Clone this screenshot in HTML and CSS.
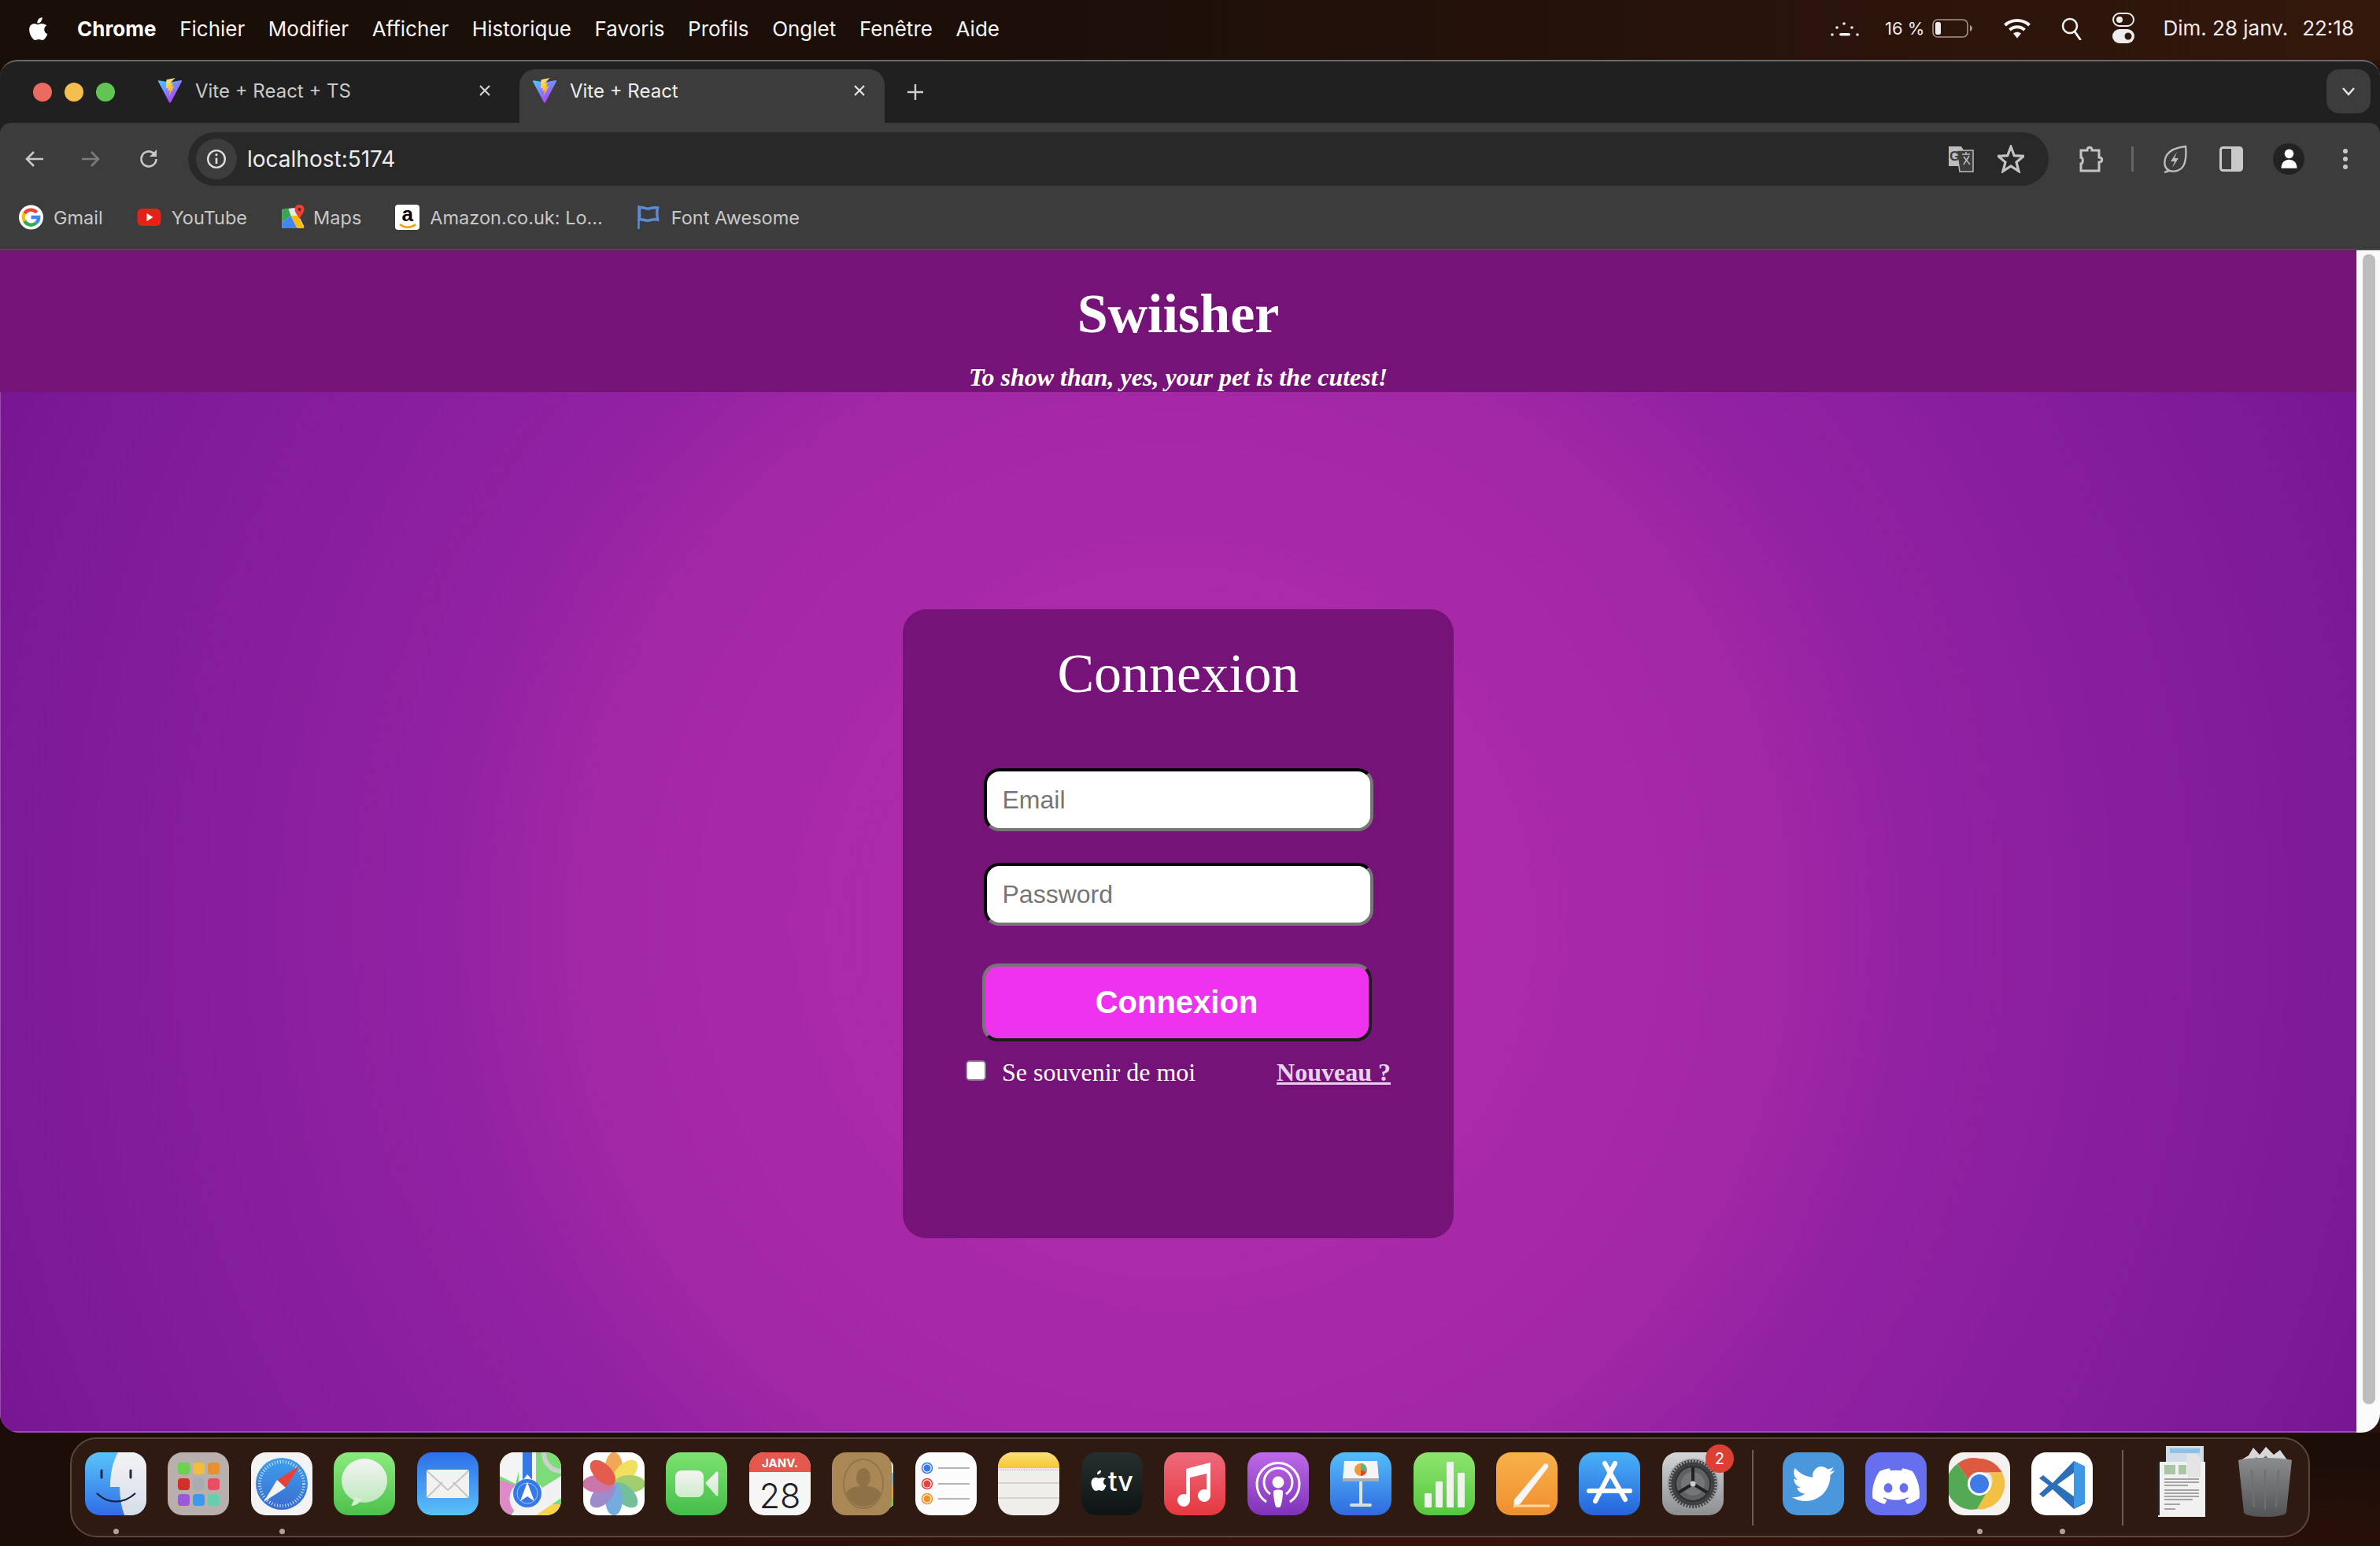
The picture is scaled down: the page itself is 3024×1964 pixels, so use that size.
FILE: index.html
```html
<!DOCTYPE html>
<html lang="fr">
<head>
  <meta charset="utf-8">
  <title>Swiisher</title>
  <link rel="stylesheet" href="styles.css">
</head>
<body>
  <!-- macOS menu bar -->
  <header class="menubar">
    <svg class="apple" viewBox="0 0 24 30"><path d="M17 1c.2 2.200-.6 4-1.700 5.300-1.200 1.400-2.900 2.200-4.400 2-.2-2 .7-3.900 1.700-5.100C13.800 1.900 15.600 1.100 17 1zM22.500 10.800c-2 1.300-3 3-3 5.200 0 2.500 1.300 4.500 3.900 5.500-.6 1.800-1.500 3.500-2.700 5.100-1.100 1.500-2.200 2.400-3.500 2.400-1.600 0-2.400-1-4.400-1-2.100 0-3 1-4.500 1-1.400 0-2.700-1.200-3.900-3C2.700 23.500 1 19.500 1 16.200 1 11.400 4 8.700 7.300 8.700c1.700 0 3.200 1.100 4.200 1.100 1.100 0 2.700-1.200 4.800-1.200 2.500 0 4.800 1 6.200 2.200z" fill="#fff"/></svg>
    <nav class="menu">
      <span class="menu-app">Chrome</span>
      <span>Fichier</span>
      <span>Modifier</span>
      <span>Afficher</span>
      <span>Historique</span>
      <span>Favoris</span>
      <span>Profils</span>
      <span>Onglet</span>
      <span>Fenêtre</span>
      <span>Aide</span>
    </nav>
    <div class="status">
      <svg class="st-dots" viewBox="0 0 36 24"><g fill="#eee"><circle cx="2" cy="20" r="1.800"/><circle cx="8" cy="11" r="1.800"/><circle cx="17" cy="6" r="1.800"/><circle cx="27" cy="11" r="1.800"/><circle cx="34" cy="20" r="1.800"/><rect x="11" y="18" width="14" height="3.600" rx="1.800"/></g></svg>
      <span class="st-pct">16 %</span>
      <svg class="st-batt" viewBox="0 0 52 26"><rect x="1" y="2" width="44" height="22" rx="6" fill="none" stroke="#a8958c" stroke-width="1.600"/><rect x="4" y="5" width="7" height="16" rx="2.500" fill="#eee"/><path d="M48 9c2 1 3 2.500 3 4s-1 3-3 4z" fill="#a8958c"/></svg>
      <svg class="st-wifi" viewBox="0 0 36 30"><g fill="none" stroke="#f4f4f4" stroke-width="4"><path d="M2.500 11C11 3 25 3 33.500 11"/><path d="M8.500 17c5.500-5 13.500-5 19 0"/></g><path d="M13 21.500c3-2.500 7-2.500 10 0l-5 6z" fill="#f4f4f4"/></svg>
      <svg class="st-search" viewBox="0 0 26 30"><circle cx="11" cy="12" r="9" fill="none" stroke="#f0f0f0" stroke-width="2.600"/><path d="M17 19l7 10" stroke="#f0f0f0" stroke-width="3" stroke-linecap="round"/></svg>
      <svg class="st-ctrl" viewBox="0 0 28 40"><rect x="1" y="1" width="26" height="16" rx="8" fill="none" stroke="#eee" stroke-width="2"/><circle cx="9" cy="9" r="4" fill="#eee"/><rect y="21" width="28" height="18" rx="9" fill="#eee"/><circle cx="20" cy="30" r="4.500" fill="#33170b"/></svg>
      <span class="st-date">Dim. 28 janv.</span>
      <span class="st-time">22:18</span>
    </div>
  </header>

  <div class="window">
    <!-- tab strip -->
    <div class="tabstrip">
      <div class="lights">
        <span class="light red"></span>
        <span class="light yellow"></span>
        <span class="light green"></span>
      </div>
      <div class="tab">
        <svg class="favicon" viewBox="0 0 32 34"><defs><linearGradient id="va" x1="0" y1="0" x2="0.7" y2="1"><stop offset="0" stop-color="#41d1ff"/><stop offset="1" stop-color="#bd34fe"/></linearGradient><linearGradient id="vb" x1="0" y1="0" x2="0.3" y2="1"><stop offset="0" stop-color="#ffea83"/><stop offset="1" stop-color="#ffa800"/></linearGradient></defs><path d="M31 5.500 17 32q-1 1.500-2 0L1 5.500Q.3 4 2 4.200L16 6.500 30 4q1.700-.2 1 1.500z" fill="url(#va)"/><path d="M22.500 1 11.500 3.200 10.800 14.500l3-.7-.8 3.800 3-.8-1.400 7.500L21.500 11.300l-3.300.6 1.200-4.500-3.300.5z" fill="url(#vb)"/></svg>
        <span class="tab-title">Vite + React + TS</span>
        <svg class="tab-close" viewBox="0 0 16 16"><path d="M2 2l12 12M14 2 2 14" stroke="#d0d0d0" stroke-width="2.200"/></svg>
      </div>
      <div class="tab tab-active">
        <svg class="favicon" viewBox="0 0 32 34"><path d="M31 5.500 17 32q-1 1.500-2 0L1 5.500Q.3 4 2 4.200L16 6.500 30 4q1.700-.2 1 1.500z" fill="url(#va)"/><path d="M22.500 1 11.500 3.200 10.800 14.500l3-.7-.8 3.800 3-.8-1.400 7.500L21.500 11.300l-3.300.6 1.200-4.500-3.300.5z" fill="url(#vb)"/></svg>
        <span class="tab-title">Vite + React</span>
        <svg class="tab-close" viewBox="0 0 16 16"><path d="M2 2l12 12M14 2 2 14" stroke="#e4e4e4" stroke-width="2.200"/></svg>
      </div>
      <svg class="tab-new" viewBox="0 0 20 20"><path d="M10 0v20M0 10h20" stroke="#d0d0d0" stroke-width="2.400"/></svg>
      <div class="tab-list">
        <svg viewBox="0 0 18 12"><path d="M2 2l7 8 7-8" fill="none" stroke="#e8e8e8" stroke-width="2.400"/></svg>
      </div>
    </div>

    <!-- toolbar -->
    <div class="toolbar">
      <svg class="tb-icon" viewBox="0 0 28 28"><path d="M25 14H5M13 5l-9 9 9 9" fill="none" stroke="#c8c8c8" stroke-width="2.600"/></svg>
      <svg class="tb-icon tb-fwd" viewBox="0 0 28 28"><path d="M3 14h20M15 5l9 9-9 9" fill="none" stroke="#7c7c7c" stroke-width="2.600"/></svg>
      <svg class="tb-icon tb-reload" viewBox="0 0 28 28"><path d="M23.500 14a9.500 9.500 0 1 1-3-7" fill="none" stroke="#c8c8c8" stroke-width="2.600"/><path d="M24 2v9h-9z" fill="#c8c8c8"/></svg>
      <div class="omnibox">
        <span class="site-info">
          <svg viewBox="0 0 24 24"><circle cx="12" cy="12" r="10" fill="none" stroke="#ddd" stroke-width="2.200"/><path d="M12 10.500v7" stroke="#ddd" stroke-width="2.400"/><circle cx="12" cy="7" r="1.500" fill="#ddd"/></svg>
        </span>
        <span class="url">localhost:5174</span>
        <svg class="omni-translate" viewBox="0 0 34 34"><path d="M1 1h16l3 5h0v20H1z" fill="#bdbdbd"/><path d="M11 6h21v27H15z" fill="#3c3c3c" stroke="#bdbdbd" stroke-width="1.500"/><path d="M18 11h10M23 8v3M20 24l7-11M20 14l8 10" stroke="#bdbdbd" stroke-width="1.500" fill="none"/><text x="2" y="19" class="translate-g">G</text></svg>
        <svg class="omni-star" viewBox="0 0 34 36"><path d="M17 2.500l4.300 11.200 11.700.7-9 7.600 3 11.500L17 27l-10 6.500 3-11.500-9-7.600 11.700-.7z" fill="none" stroke="#c4c4c4" stroke-width="3.200"/></svg>
      </div>
      <svg class="tb-puzzle" viewBox="0 0 34 36"><path d="M3 7h8c0-5 6-5 6 0h9v9c5 0 5 6 0 6v11H3v-9c3 0 3-8 0-8z" fill="none" stroke="#c4c4c4" stroke-width="3"/></svg>
      <span class="tb-sep"></span>
      <svg class="tb-leaf" viewBox="0 0 32 36"><path d="M30 2c1 10 1 18-3 25-3 5-10 8-17 6C2 30 2 20 6 13 11 6 20 3 30 2zM9 33l-6 2" fill="none" stroke="#bdbdbd" stroke-width="2.400"/><path d="M19 9l-8 12h5l-3 8 8-12h-5z" fill="#bdbdbd"/></svg>
      <svg class="tb-panel" viewBox="0 0 30 32"><rect x="1.500" y="1.500" width="27" height="29" rx="3" fill="none" stroke="#c8c8c8" stroke-width="3"/><rect x="15" y="1.500" width="14" height="29" fill="#c8c8c8"/></svg>
      <span class="avatar">
        <svg viewBox="0 0 26 36"><circle cx="13" cy="10" r="7" fill="#fff"/><path d="M1 32c0-9 6-13 12-13s12 4 12 13z" fill="#fff"/></svg>
      </span>
      <svg class="tb-more" viewBox="0 0 6 26"><g fill="#c8c8c8"><circle cx="3" cy="3" r="3"/><circle cx="3" cy="13" r="3"/><circle cx="3" cy="23" r="3"/></g></svg>
    </div>

    <!-- bookmarks bar -->
    <div class="bookmarks">
      <a class="bm">
        <svg viewBox="0 0 32 32"><circle cx="16" cy="16" r="16" fill="#fff"/><g fill="none" stroke-width="4.500"><path d="M23.300 9.700A10 10 0 0 0 7.400 11" stroke="#ea4335"/><path d="M7.400 11a10 10 0 0 0 0 10" stroke="#fbbc05"/><path d="M7.400 21a10 10 0 0 0 15.400 2.400" stroke="#34a853"/><path d="M22.800 23.400A10 10 0 0 0 26 16H16" stroke="#4285f4"/></g></svg>
        <span>Gmail</span>
      </a>
      <a class="bm">
        <svg viewBox="0 0 30 32"><rect y="5" width="30" height="22" rx="6" fill="#e62117"/><path d="M12 11l8 5-8 5z" fill="#fff"/></svg>
        <span>YouTube</span>
      </a>
      <a class="bm bm-maps">
        <svg viewBox="0 0 30 32"><path d="M1 6l16-2 12 24-28 2z" fill="#e8e8e8"/><path d="M1 6l8-1 3 9-11 8z" fill="#34a853"/><path d="M1 22l11-8 8 16H1z" fill="#4285f4"/><path d="M12 14l8 16h9l-8-16z" fill="#fbbc05"/><path d="M23 0c4 0 6 3 6 6 0 4-4 8-6 12-2-4-6-8-6-12 0-3 2-6 6-6z" fill="#ea4335"/><circle cx="23" cy="6" r="2.200" fill="#8e1c14"/></svg>
        <span>Maps</span>
      </a>
      <a class="bm">
        <span class="bm-amazon">a<svg viewBox="0 0 22 8"><path d="M1 1c6 5 14 5 20 0" fill="none" stroke="#f90" stroke-width="2.400"/></svg></span>
        <span>Amazon.co.uk: Lo...</span>
      </a>
      <a class="bm">
        <svg viewBox="0 0 30 32"><path d="M2 1v30" stroke="#5b8bd6" stroke-width="2.500"/><path d="M3 4c4-2 8 2 12 1s8-2 11-1c-1 4-1 8 0 15-3-1-7 0-11 1s-8-2-12-1z" fill="none" stroke="#5b8bd6" stroke-width="3.500"/></svg>
        <span>Font Awesome</span>
      </a>
    </div>

    <!-- page -->
    <div class="viewport">
      <main class="page">
        <div class="site-header">
          <h1 class="site-title">Swiisher</h1>
          <p class="site-tagline">To show than, yes, your pet is the cutest!</p>
        </div>
        <div class="page-body">
          <form class="login-card">
            <h2 class="login-title">Connexion</h2>
            <input class="login-input" type="text" placeholder="Email">
            <input class="login-input" type="password" placeholder="Password">
            <button class="login-btn" type="button">Connexion</button>
            <div class="login-row">
              <label class="remember"><input type="checkbox"> Se souvenir de moi</label>
              <a class="new-link" href="#">Nouveau ?</a>
            </div>
          </form>
        </div>
      </main>
      <div class="scrollbar"><div class="scroll-thumb"></div></div>
    </div>
  </div>

  <!-- dock -->
  <footer class="desktop">
    <div class="dock">
      <div class="dock-item running"><svg viewBox="0 0 78 80"><defs><linearGradient id="f1" x1="0" y1="0" x2="0" y2="1"><stop offset="0" stop-color="#5ac4fb"/><stop offset="1" stop-color="#2f6de6"/></linearGradient><linearGradient id="f2" x1="0" y1="0" x2="0" y2="1"><stop offset="0" stop-color="#f3f3f5"/><stop offset="1" stop-color="#d6dde9"/></linearGradient></defs><rect width="78" height="80" rx="19" fill="url(#f1)"/><path d="M42 0C35 13 32 27 32 44h12c0 13 2 25 6 36h9a19 19 0 0 0 19-19V19A19 19 0 0 0 59 0z" fill="url(#f2)"/><path d="M21 23v9M58 23v9" stroke="#1d2b45" stroke-width="3" stroke-linecap="round"/><path d="M15 52c14 14 34 14 49 0" fill="none" stroke="#14213a" stroke-width="2.200"/></svg></div>

      <div class="dock-item"><svg viewBox="0 0 78 80"><rect width="78" height="80" rx="19" fill="#b8b0ac"/><rect x="13" y="13" width="15" height="15" rx="4" fill="#6bd24e"/><rect x="32" y="13" width="15" height="15" rx="4" fill="#f2bd3b"/><rect x="51" y="13" width="15" height="15" rx="4" fill="#e88f2e"/><rect x="13" y="33" width="15" height="15" rx="4" fill="#d0322a"/><rect x="32" y="33" width="15" height="15" rx="4" fill="#a7adb0"/><rect x="51" y="33" width="15" height="15" rx="4" fill="#ea4c61"/><rect x="13" y="53" width="15" height="15" rx="4" fill="#9b59d8"/><rect x="32" y="53" width="15" height="15" rx="4" fill="#3b9af0"/><rect x="51" y="53" width="15" height="15" rx="4" fill="#66cdb0"/></svg></div>

      <div class="dock-item running"><svg viewBox="0 0 78 80"><defs><linearGradient id="s1" x1="0" y1="0" x2="0" y2="1"><stop offset="0" stop-color="#3da0ee"/><stop offset="1" stop-color="#3a6cd0"/></linearGradient></defs><rect width="78" height="80" rx="19" fill="#f3f3f3"/><circle cx="39" cy="40" r="33" fill="url(#s1)"/><circle cx="39" cy="40" r="28" fill="none" stroke="#d8e8fa" stroke-width="4" stroke-dasharray="1 2.500"/><path d="M62 17 33 35l11 10z" fill="#e5423b"/><path d="M16 63l17-28 11 10z" fill="#f3f3f3"/></svg></div>

      <div class="dock-item"><svg viewBox="0 0 78 80"><defs><linearGradient id="m1" x1="0" y1="0" x2="0" y2="1"><stop offset="0" stop-color="#8ceb7e"/><stop offset="1" stop-color="#4cc14c"/></linearGradient><linearGradient id="m2" x1="0" y1="0" x2="0" y2="1"><stop offset="0" stop-color="#f4f4f4"/><stop offset="1" stop-color="#bfe8bd"/></linearGradient></defs><rect width="78" height="80" rx="19" fill="url(#m1)"/><ellipse cx="39" cy="36" rx="29" ry="28" fill="url(#m2)"/><path d="M26 56c0 5-2 9-4 12 5 0 10-3 14-8z" fill="#d6efd2"/></svg></div>

      <div class="dock-item"><svg viewBox="0 0 78 80"><defs><linearGradient id="ml" x1="0" y1="0" x2="0" y2="1"><stop offset="0" stop-color="#2c6fe8"/><stop offset="1" stop-color="#5bc1fa"/></linearGradient></defs><rect width="78" height="80" rx="19" fill="url(#ml)"/><rect x="12" y="22" width="54" height="36" rx="3" fill="#f2f2f2"/><path d="M13 24l26 24 26-24M13 57l19-19M65 57 46 38" fill="none" stroke="#c4c4c4" stroke-width="1.800"/></svg></div>

      <div class="dock-item"><svg viewBox="0 0 78 80"><defs><clipPath id="mc"><rect width="78" height="80" rx="19"/></clipPath></defs><g clip-path="url(#mc)"><rect width="78" height="80" fill="#f2f2f2"/><path d="M0 0h78v80H0z" fill="#7ddb78"/><path d="M0 35 30 45 14 80H0z" fill="#e089c9"/><path d="M45 80l12-14 21 0v14z" fill="#f7d24a"/><path d="M30 60 78 30v28L46 80H14z" fill="#f1f1f1"/><path d="M0 0h30l-10 40L0 30z" fill="#f4f4f4"/><rect x="24" y="0" width="22" height="40" fill="#f4f4f4"/><rect x="29" y="0" width="12" height="40" fill="#3778e8"/><path d="M56 0c0 14 10 24 22 24" fill="none" stroke="#cfcfcf" stroke-width="6"/><path d="M35 28l-7 9a23 23 0 1 0 15 0z" fill="#f2f2f2"/><circle cx="35" cy="52" r="18" fill="#3778e8"/><circle cx="35" cy="52" r="13" fill="none" stroke="#9cc0f5" stroke-width="1"/><path d="M35 38l9 24-9-6-9 6z" fill="#fff"/></g></svg></div>

      <div class="dock-item"><svg viewBox="0 0 78 80"><rect width="78" height="80" rx="19" fill="#fff"/><g transform="translate(39 40)" opacity=".85"><ellipse cy="-20" rx="11" ry="20" fill="#ef9a3a"/><ellipse cy="-20" rx="11" ry="20" fill="#efdb45" transform="rotate(45)"/><ellipse cy="-20" rx="11" ry="20" fill="#93c655" transform="rotate(90)"/><ellipse cy="-20" rx="11" ry="20" fill="#5cb48a" transform="rotate(135)"/><ellipse cy="-20" rx="11" ry="20" fill="#5c9fd8" transform="rotate(180)"/><ellipse cy="-20" rx="11" ry="20" fill="#8a78c4" transform="rotate(225)"/><ellipse cy="-20" rx="11" ry="20" fill="#c45e9c" transform="rotate(270)"/><ellipse cy="-20" rx="11" ry="20" fill="#e0402f" transform="rotate(315)"/></g></svg></div>

      <div class="dock-item"><svg viewBox="0 0 78 80"><defs><linearGradient id="ft" x1="0" y1="0" x2="0" y2="1"><stop offset="0" stop-color="#7de36f"/><stop offset="1" stop-color="#45bd4a"/></linearGradient><linearGradient id="ft2" x1="0" y1="0" x2="0" y2="1"><stop offset="0" stop-color="#f4f4f4"/><stop offset="1" stop-color="#cfeccb"/></linearGradient></defs><rect width="78" height="80" rx="19" fill="url(#ft)"/><rect x="12" y="23" width="36" height="34" rx="8" fill="url(#ft2)"/><path d="M52 39l13-13v28z" fill="url(#ft2)" stroke="url(#ft2)" stroke-width="3" stroke-linejoin="round"/></svg></div>

      <div class="dock-item"><svg viewBox="0 0 78 80"><defs><clipPath id="cc"><rect width="78" height="80" rx="19"/></clipPath></defs><g clip-path="url(#cc)"><rect width="78" height="80" fill="#f6f6f6"/><rect width="78" height="25" fill="#e5584d"/></g><text x="39" y="19" class="cal-month">JANV.</text><text x="39" y="71" class="cal-day">28</text></svg></div>

      <div class="dock-item"><svg viewBox="0 0 78 80"><path d="M66 10h4c5 0 8 4 8 8v44c0 6-3 9-8 9h-4z" fill="#e8e8e8"/><rect x="70" y="26" width="8" height="16" fill="#62b7e8"/><rect x="70" y="42" width="8" height="16" fill="#ef9d3a"/><rect x="70" y="58" width="8" height="10" fill="#6ccb5f"/><rect width="76" height="80" rx="18" fill="#a98856"/><ellipse cx="40" cy="40" rx="25" ry="31" fill="none" stroke="#8e7146" stroke-width="1.500"/><ellipse cx="40" cy="32" rx="9" ry="12" fill="#8e7146"/><path d="M18 52c4-8 12-9 22-9s18 1 22 9c-4 12-14 17-22 17s-18-5-22-17z" fill="#8e7146"/></svg></div>

      <div class="dock-item"><svg viewBox="0 0 78 80"><rect width="78" height="80" rx="19" fill="#fcfcfc"/><g fill="none" stroke-width="1.500"><circle cx="15" cy="20" r="6.500" stroke="#3778e8"/><circle cx="15" cy="40" r="6.500" stroke="#e5423b"/><circle cx="15" cy="59" r="6.500" stroke="#ef9222"/></g><circle cx="15" cy="20" r="4.500" fill="#3778e8"/><circle cx="15" cy="40" r="4.500" fill="#e5423b"/><circle cx="15" cy="59" r="4.500" fill="#ef9222"/><path d="M29 20h40M29 40h40M29 59h40" stroke="#b4b4b4" stroke-width="2"/></svg></div>

      <div class="dock-item"><svg viewBox="0 0 78 80"><defs><clipPath id="nc"><rect width="78" height="80" rx="19"/></clipPath><linearGradient id="ny" x1="0" y1="0" x2="0" y2="1"><stop offset="0" stop-color="#fde07a"/><stop offset="1" stop-color="#f6c62f"/></linearGradient></defs><g clip-path="url(#nc)"><rect width="78" height="80" fill="#efeeea"/><rect width="78" height="20" fill="url(#ny)"/><path d="M0 39h78M0 58h78" stroke="#d4d4d0" stroke-width="2"/><path d="M0 22h78" stroke="#c9c9c5" stroke-width="2" stroke-dasharray="1.500 1.500"/></g></svg></div>

      <div class="dock-item"><svg viewBox="0 0 78 80"><defs><linearGradient id="tv" x1="0" y1="0" x2="0" y2="1"><stop offset="0" stop-color="#26302f"/><stop offset="1" stop-color="#0e1314"/></linearGradient></defs><rect width="78" height="80" rx="19" fill="url(#tv)"/><path d="M25 23c0 3-2 5-5 5 0-3 2-5 5-5zM31 33c-2 1-3 2.500-3 4.500 0 2 1 3.500 3.500 4.500-1 3-3 7-5.500 7-1.500 0-2-1-3.500-1-1.700 0-2.500 1-4 1-2.500 0-6-5-6-10 0-4.500 3-7 5.700-7 1.500 0 3 1 3.800 1 1 0 2.500-1 4.200-1 2 0 3.800.8 4.800 2z" fill="#fff"/><text x="34" y="49" class="tv-label">tv</text></svg></div>

      <div class="dock-item"><svg viewBox="0 0 78 80"><defs><linearGradient id="mu" x1="0" y1="0" x2="0" y2="1"><stop offset="0" stop-color="#ee6a7c"/><stop offset="1" stop-color="#e6383f"/></linearGradient></defs><rect width="78" height="80" rx="19" fill="url(#mu)"/><path d="M28 21 59 13v42a8 8 0 1 1-5-7.500V27L33 32v29a8 8 0 1 1-5-7.500z" fill="#fff"/></svg></div>

      <div class="dock-item"><svg viewBox="0 0 78 80"><defs><linearGradient id="po" x1="0" y1="0" x2="0" y2="1"><stop offset="0" stop-color="#be69e8"/><stop offset="1" stop-color="#7f33b8"/></linearGradient></defs><rect width="78" height="80" rx="19" fill="url(#po)"/><g fill="none" stroke="#fff" stroke-width="3"><path d="M24 63a27 27 0 1 1 30 0"/><path d="M29 53a18 18 0 1 1 20 0"/></g><circle cx="39" cy="38" r="7.500" fill="#fff"/><path d="M33 49c3-2 9-2 12 0 0 9-2 20-4 21h-4c-2-1-4-12-4-21z" fill="#fff"/></svg></div>

      <div class="dock-item"><svg viewBox="0 0 78 80"><defs><linearGradient id="ke" x1="0" y1="0" x2="0" y2="1"><stop offset="0" stop-color="#55bdf8"/><stop offset="1" stop-color="#2f6ae0"/></linearGradient></defs><rect width="78" height="80" rx="19" fill="url(#ke)"/><path d="M18 11h42l2 24H16z" fill="#f5f5f5"/><rect x="16" y="33" width="46" height="4" fill="#a7adb5"/><path d="M37 37h4v28h-4z" fill="#dfe4ea"/><rect x="25" y="65" width="28" height="4" rx="2" fill="#d8dde2"/><circle cx="39" cy="22" r="8" fill="#ef9a3a"/><path d="M39 22V14a8 8 0 0 1 7 11z" fill="#5cb48a"/><path d="M39 22l7 3a8 8 0 0 1-7 5z" fill="#e5423b"/></svg></div>

      <div class="dock-item"><svg viewBox="0 0 78 80"><defs><linearGradient id="nu" x1="0" y1="0" x2="0" y2="1"><stop offset="0" stop-color="#8ee56e"/><stop offset="1" stop-color="#55c83e"/></linearGradient></defs><rect width="78" height="80" rx="19" fill="url(#nu)"/><g fill="#eef5ea"><rect x="14" y="52" width="9" height="18" rx="1"/><rect x="28" y="37" width="9" height="33" rx="1"/><rect x="42" y="12" width="9" height="58" rx="1"/><rect x="56" y="26" width="9" height="44" rx="1"/></g></svg></div>

      <div class="dock-item"><svg viewBox="0 0 78 80"><defs><linearGradient id="pg" x1="0" y1="0" x2="0" y2="1"><stop offset="0" stop-color="#f8b24a"/><stop offset="1" stop-color="#ef8e30"/></linearGradient></defs><rect width="78" height="80" rx="19" fill="url(#pg)"/><path d="M61 15c3-2 6 1 5 4L31 65l-9 6 1-11z" fill="#f6f6f6"/><path d="M22 68h46" stroke="#fbd9a4" stroke-width="3"/></svg></div>

      <div class="dock-item"><svg viewBox="0 0 78 80"><defs><linearGradient id="as" x1="0" y1="0" x2="0" y2="1"><stop offset="0" stop-color="#49b2f7"/><stop offset="1" stop-color="#2563db"/></linearGradient></defs><rect width="78" height="80" rx="19" fill="url(#as)"/><g stroke="#fff" stroke-width="6" stroke-linecap="round"><path d="M46 14 21 62"/><path d="M33 14l26 46"/><path d="M13 49h52"/></g></svg></div>

      <div class="dock-item"><svg viewBox="0 0 78 80"><defs><linearGradient id="se" x1="0" y1="0" x2="0" y2="1"><stop offset="0" stop-color="#d4d6d8"/><stop offset="1" stop-color="#8c8e90"/></linearGradient></defs><rect width="78" height="80" rx="19" fill="url(#se)"/><circle cx="39" cy="40" r="31" fill="#3f4042"/><circle cx="39" cy="40" r="30" fill="none" stroke="#96999b" stroke-width="5" stroke-dasharray="2 2"/><circle cx="39" cy="40" r="22" fill="#5f6163" stroke="#2e2f30" stroke-width="2"/><circle cx="39" cy="40" r="15" fill="#737577"/><g stroke="#222" stroke-width="4"><path d="M39 40V19M39 40l18 11M39 40 21 51"/></g><circle cx="39" cy="40" r="3.500" fill="#ccc"/></svg><span class="badge">2</span></div>

      <span class="dock-sep"></span>

      <div class="dock-item"><svg viewBox="0 0 78 80"><rect width="78" height="80" rx="19" fill="#4b97dc"/><g transform="translate(12 13) scale(2.250)"><path d="M23.953 4.570a10 10 0 01-2.825.775 4.958 4.958 0 002.163-2.723c-.951.555-2.005.959-3.127 1.184a4.920 4.920 0 00-8.384 4.482C7.690 8.095 4.067 6.130 1.640 3.162a4.822 4.822 0 00-.666 2.475c0 1.710.870 3.213 2.188 4.096a4.904 4.904 0 01-2.228-.616v.060a4.923 4.923 0 003.946 4.827 4.996 4.996 0 01-2.212.085 4.936 4.936 0 004.604 3.417 9.867 9.867 0 01-6.102 2.105c-.390 0-.779-.023-1.170-.067a13.995 13.995 0 007.557 2.209c9.053 0 13.998-7.496 13.998-13.985 0-.210 0-.420-.015-.630A9.935 9.935 0 0024 4.590z" fill="#fff"/></g></svg></div>

      <div class="dock-item"><svg viewBox="0 0 78 80"><rect width="78" height="80" rx="19" fill="#6670ef"/><g transform="translate(9 13) scale(2.500)"><path d="M20.317 4.370a19.791 19.791 0 00-4.885-1.515.074.074 0 00-.079.037c-.211.375-.445.865-.608 1.250-1.845-.276-3.680-.276-5.487 0-.164-.393-.406-.874-.618-1.250a.077.077 0 00-.079-.037 19.736 19.736 0 00-4.885 1.515.070.070 0 00-.032.028C.533 9.046-.319 13.580.099 18.058a.082.082 0 00.031.056c2.053 1.508 4.041 2.423 5.993 3.029a.078.078 0 00.084-.028c.462-.630.873-1.295 1.226-1.994a.076.076 0 00-.042-.106c-.653-.248-1.274-.550-1.872-.892a.077.077 0 01-.008-.128c.126-.094.252-.192.372-.291a.074.074 0 01.078-.011c3.928 1.793 8.180 1.793 12.061 0a.074.074 0 01.079.010c.120.099.246.198.373.292a.077.077 0 01-.007.128 12.299 12.299 0 01-1.873.891.077.077 0 00-.041.107c.360.698.772 1.363 1.225 1.993a.076.076 0 00.084.029c1.961-.607 3.950-1.522 6.002-3.029a.077.077 0 00.031-.055c.500-5.177-.838-9.674-3.548-13.661a.061.061 0 00-.031-.029zM8.020 15.331c-1.183 0-2.157-1.086-2.157-2.419 0-1.333.956-2.419 2.157-2.419 1.211 0 2.176 1.095 2.157 2.419 0 1.333-.956 2.419-2.157 2.419zm7.975 0c-1.183 0-2.157-1.086-2.157-2.419 0-1.333.955-2.419 2.157-2.419 1.211 0 2.176 1.095 2.157 2.419 0 1.333-.946 2.419-2.157 2.419z" fill="#fff"/></g></svg></div>

      <div class="dock-item running"><svg viewBox="0 0 78 80"><rect width="78" height="80" rx="19" fill="#f4f1ee"/><circle cx="39" cy="40" r="33" fill="#e8e6e2"/><path d="M39 8a32 32 0 0 1 28.600 17.500H39a15 15 0 0 0-14 9L11 14.500A32 32 0 0 1 39 8z" fill="#dc5a40"/><path d="M67.600 25.500A32 32 0 0 1 36 72l14-24a15 15 0 0 0 1-22.500z" fill="#f2c043"/><path d="M11 14.500l14 20a15 15 0 0 0 25 13.500L36 72A32 32 0 0 1 11 14.500z" fill="#53a954"/><circle cx="39" cy="40" r="15" fill="#fff"/><circle cx="39" cy="40" r="12" fill="#3f7ae6"/></svg></div>

      <div class="dock-item running"><svg viewBox="0 0 78 80"><rect width="78" height="80" rx="19" fill="#fff"/><path d="M54 11 27 39 15 29l-5 4 12 9-12 11 5 4 12-10 27 25 14-7V18z" fill="#2a6fb8"/><path d="M54 11l14 7v46l-14 7V11z" fill="#3d99e6"/><path d="M54 26v30L33 41z" fill="#fff"/></svg></div>

      <span class="dock-sep"></span>

      <div class="dock-item doc-item"><svg viewBox="0 0 64 92"><rect x="12" y="0" width="48" height="30" fill="#cfdde9"/><rect x="17" y="3" width="38" height="6" fill="#8fc0e8"/><rect x="2" y="20" width="60" height="70" fill="#f1f1f1"/><rect x="0" y="20" width="4" height="68" fill="#222"/><rect x="10" y="24" width="14" height="12" fill="#a9c6a4"/><rect x="28" y="24" width="10" height="12" fill="#a9c6a4"/><path d="M38 10l12 0 6 6v24H40z" fill="#e4e4e4"/><path d="M10 42h44M10 46h44M10 50h30M10 56h44M10 60h44M10 64h44M10 68h36M10 74h20M10 80h14" stroke="#8b8b8b" stroke-width="1.500"/></svg></div>

      <div class="dock-item trash-item"><svg viewBox="0 0 70 92"><defs><linearGradient id="tr" x1="0" y1="0" x2="0" y2="1"><stop offset="0" stop-color="#8b8c8e"/><stop offset="1" stop-color="#525456"/></linearGradient></defs><path d="M4 18l10-6 6-10 8 9 8-10 10 10 8-6 10 14z" fill="#d8d8d8"/><path d="M22 14l6 6 8-8 6 8z" fill="#56708c"/><path d="M1 18c10-4 58-4 68 0l-7 66c-1 8-53 8-54 0z" fill="url(#tr)"/><path d="M18 30l3 48M35 30v50M52 30l-3 48" stroke="#6e7072" stroke-width="2"/></svg></div>
    </div>
  </footer>
</body>
</html>
```

FILE: styles.css
```css
* { box-sizing: border-box; }

html, body {
  margin: 0;
  height: 100%;
}

body {
  width: 3024px;
  height: 1964px;
  overflow: hidden;
  display: flex;
  flex-direction: column;
  background: linear-gradient(90deg, #1a0e09, #20100a 50%, #2a130b);
  font-family: Inter, "Noto Sans", sans-serif;
  color: #fff;
}

/* ---- menu bar ---- */
.menubar {
  height: 76px;
  flex: none;
  display: flex;
  align-items: center;
  background: linear-gradient(90deg, #190e08, #1c0f09 45%, #33170b);
  font-size: 26px;
  padding-left: 36px;
}
.apple { width: 25px; height: 31px; margin-right: 37px; margin-top: -4px; }
.menu { display: flex; gap: 29.6px; margin-top: -3px; }
.menu span { color: #f5f5f5; }
.menu .menu-app { font-weight: 700; color: #fff; }
.status {
  margin-left: auto;
  display: flex;
  align-items: center;
  padding-right: 33px;
  margin-top: -5px;
  color: #f0ebe8;
  font-size: 26px;
}
.st-dots { width: 36px; height: 24px; margin-right: 33px; }
.st-pct { font-size: 22px; margin-right: 10px; }
.st-batt { width: 52px; height: 26px; margin-right: 38px; }
.st-wifi { width: 36px; height: 30px; margin-right: 38px; }
.st-search { width: 26px; height: 30px; margin-right: 39px; }
.st-ctrl { width: 28px; height: 40px; margin-right: 36px; }
.st-date { margin-right: 18px; }

/* ---- browser window ---- */
.window {
  height: 1744px;
  flex: none;
  display: flex;
  flex-direction: column;
  border-radius: 22px 22px 24px 24px;
  overflow: hidden;
  background: #202020;
  border-top: 2px solid #6a6a6a;
}

.tabstrip {
  height: 78px;
  flex: none;
  display: flex;
  align-items: flex-start;
  padding-top: 10px;
  position: relative;
}
.lights {
  display: flex;
  gap: 16px;
  padding: 17px 0 0 42px;
  width: 186px;
}
.light { width: 24px; height: 24px; border-radius: 50%; }
.red { background: #ec6a5e; }
.yellow { background: #f5bf4f; }
.green { background: #61c554; }

.tab {
  width: 474px;
  height: 68px;
  padding: 0 36px 14px 14px;
  display: flex;
  align-items: center;
  font-size: 24px;
  color: #c9c9c9;
}
.tab-active {
  width: 464px;
  padding-left: 16px;
  padding-right: 24px;
  background: #3c3c3c;
  border-radius: 20px 20px 0 0;
  color: #eee;
}
.favicon { width: 32px; height: 34px; margin-right: 16px; }
.tab-close { width: 16px; height: 16px; margin-left: auto; }
.tab-new { width: 20px; height: 20px; margin: 19px 0 0 29px; }
.tab-list {
  margin-left: auto;
  margin-right: 12px;
  width: 56px;
  height: 56px;
  border-radius: 16px;
  background: #3c3c3c;
  display: flex;
  align-items: center;
  justify-content: center;
}
.tab-list svg { width: 18px; height: 12px; }

.toolbar {
  height: 92px;
  flex: none;
  background: #3c3c3c;
  border-radius: 14px 14px 0 0;
  display: flex;
  align-items: center;
  padding-left: 30px;
}
.tb-icon { width: 28px; height: 28px; margin-right: 43px; }
.tb-reload { margin-left: 3px; margin-right: 36px; }
.omnibox {
  width: 2364px;
  height: 68px;
  border-radius: 34px;
  background: #282828;
  display: flex;
  align-items: center;
  padding-left: 10px;
  font-size: 28px;
  color: #ececec;
}
.site-info {
  width: 52px;
  height: 52px;
  border-radius: 50%;
  background: #3c3c3c;
  display: flex;
  align-items: center;
  justify-content: center;
  margin-right: 13px;
}
.site-info svg { width: 26px; height: 26px; }
.omni-translate { width: 34px; height: 34px; margin-left: auto; margin-right: 29px; }
.translate-g { font-size: 17px; font-weight: 700; fill: #3c3c3c; font-family: "Liberation Sans", sans-serif; }
.omni-star { width: 34px; height: 36px; margin-right: 31px; }
.tb-puzzle { width: 34px; height: 36px; margin-left: 38px; }
.tb-sep { width: 3px; height: 32px; background: #666; margin: 0 36px 0 33px; }
.tb-leaf { width: 32px; height: 36px; margin-right: 41px; }
.tb-panel { width: 30px; height: 32px; margin-right: 38px; }
.avatar {
  width: 40px;
  height: 40px;
  border-radius: 50%;
  background: #222;
  display: flex;
  align-items: center;
  justify-content: center;
  margin-right: 49px;
}
.avatar svg { width: 25px; height: 30px; }
.tb-more { width: 6px; height: 26px; }

.bookmarks {
  height: 70px;
  flex: none;
  background: #3c3c3c;
  border-bottom: 2px solid #4a4a4a;
  display: flex;
  align-items: center;
  gap: 43px;
  padding: 0 0 12px 24px;
  font-size: 23.5px;
  color: #c8c8c8;
}
.bm { display: flex; align-items: center; gap: 13px; }
.bm > svg { width: 31px; height: 32px; }
.bm-maps { gap: 10px; }
.bm-amazon {
  width: 31px;
  height: 32px;
  border-radius: 4px;
  background: #fff;
  color: #000;
  font: 700 26px/24px "Liberation Sans", sans-serif;
  text-align: center;
  display: flex;
  flex-direction: column;
  align-items: center;
}
.bm-amazon svg { width: 22px; height: 8px; }

/* ---- the actual page ---- */
.viewport {
  flex: 1;
  min-height: 0;
  display: flex;
}
.page {
  flex: 1;
  display: flex;
  flex-direction: column;
  font-family: "Liberation Serif", serif;
  background: radial-gradient(circle at 50% 57%, #b02cab 0, #ac2aaa 347px, #a228a5 754px, #9322a3 922px, #7c1a97 1497px, #761590 1700px);
  box-shadow: inset 1px 0 0 #9a4cae, inset 0 -2px 0 #a04cb0;
}
.site-header {
  height: 180px;
  flex: none;
  background: #761379;
  text-align: center;
  overflow: hidden;
  padding-top: 41px;
}
.site-title {
  margin: 0;
  font-size: 70px;
  line-height: 80px;
  font-weight: 700;
}
.site-tagline {
  margin: 21px 0 0;
  font-size: 32px;
  line-height: 38px;
  font-weight: 700;
  font-style: italic;
}
.page-body {
  flex: 1;
  display: flex;
  justify-content: center;
  padding-top: 276px;
}
.login-card {
  width: 700px;
  height: 799px;
  border-radius: 30px;
  background: #761379;
  display: flex;
  flex-direction: column;
  align-items: center;
  padding-top: 40px;
}
.login-title {
  margin: 0 0 78px;
  font-size: 70px;
  line-height: 84px;
  font-weight: 400;
}
.login-input {
  width: 495px;
  height: 80px;
  margin: 0 0 40px 0;
  padding: 0 20px;
  border: 4px inset #767676;
  border-color: #1b1b1b #767676 #767676 #1b1b1b;
  border-radius: 20px;
  background: #fff;
  font: 32px "Liberation Sans", Arial, sans-serif;
}
.login-input::placeholder { color: #757575; }
.login-btn {
  width: 495px;
  height: 99px;
  margin: 8px 4px 0 0;
  padding: 0;
  border: 4px solid #767676;
  border-color: #767676 #1b1b1b #1b1b1b #767676;
  border-radius: 20px;
  background: #ee32ee;
  color: #fff;
  font: 700 40px "Liberation Sans", Arial, sans-serif;
}
.login-row {
  width: 540px;
  margin-top: 20px;
  display: flex;
  justify-content: space-between;
  align-items: baseline;
  font-size: 32px;
  line-height: 38px;
}
.remember { display: flex; align-items: center; gap: 20px; }
.remember input {
  appearance: none;
  width: 26px;
  height: 26px;
  margin: 0 0 4px;
  background: #fff;
  border: 2px solid #8a7a8c;
  border-radius: 5px;
}
.new-link {
  color: #e6d2ea;
  font-weight: 700;
  text-decoration: underline;
}

.scrollbar {
  width: 30px;
  flex: none;
  background: #fafafa;
  border-left: 1px solid #e8e8e8;
  padding: 5px 0 0 7px;
}
.scroll-thumb {
  width: 16px;
  height: 1461px;
  border-radius: 8px;
  background: #bdbdbd;
}

/* ---- desktop + dock ---- */
.desktop {
  flex: 1;
  min-height: 0;
  padding: 6px 0 0 89px;
  background: radial-gradient(ellipse at 60% 100%, #3a130a, #1c0d08 70%);
}
.dock {
  width: 2846px;
  height: 127px;
  padding: 17px 0 0 17px;
  display: flex;
  align-items: flex-start;
  gap: 27.47px;
  background: #2f1a12;
  border: 2px solid #5a463c;
  border-radius: 34px;
}
.dock-item {
  position: relative;
  width: 78px;
  height: 80px;
  flex: none;
}
.dock-item > svg { display: block; width: 78px; height: 80px; }
.running::after {
  content: "";
  position: absolute;
  left: 36px;
  top: 97px;
  width: 7px;
  height: 7px;
  border-radius: 50%;
  background: #b0a29a;
}
.badge {
  position: absolute;
  left: 55px;
  top: -10px;
  width: 36px;
  height: 36px;
  border-radius: 50%;
  background: #dc4035;
  font-size: 20px;
  line-height: 36px;
  text-align: center;
}
.dock-sep {
  width: 2px;
  height: 96px;
  flex: none;
  background: #6d5a50;
  margin: -3px 9px 0;
}
.doc-item { width: 64px; margin: -8px 5px 0 6px; height: 92px; }
.doc-item > svg { width: 64px; height: 92px; }
.trash-item { width: 70px; margin: -8px 0 0 6px; height: 92px; }
.trash-item > svg { width: 70px; height: 92px; }

.cal-month { font-size: 15px; font-weight: 700; fill: #fff; text-anchor: middle; }
.cal-day { font-size: 43px; fill: #222; text-anchor: middle; font-weight: 300; }
.tv-label { font-size: 34px; fill: #fff; font-weight: 500; }
```
